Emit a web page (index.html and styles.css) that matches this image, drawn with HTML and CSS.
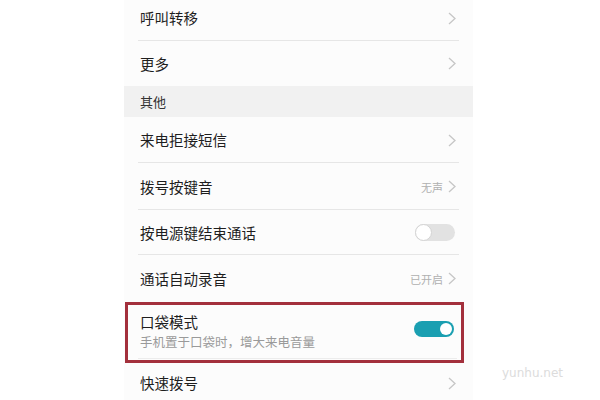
FILE: index.html
```html
<!DOCTYPE html>
<html lang="zh-CN">
<head>
    <meta charset="UTF-8">
    <meta name="viewport" content="width=device-width, initial-scale=1.0">
    <title>通话设置</title>
    <link rel="stylesheet" href="styles.css">
</head>
<body>
    <div class="screen">
        <div class="row line" style="height: 46px;">
            <span class="label">呼叫转移</span>
            <span class="right"><svg class="chev" viewBox="0 0 8 13"><polyline points="1,1 7,6.5 1,12"/></svg></span>
        </div>
        <div class="row" style="height: 45px;">
            <span class="label">更多</span>
            <span class="right"><svg class="chev" viewBox="0 0 8 13"><polyline points="1,1 7,6.5 1,12"/></svg></span>
        </div>
        <div class="section">其他</div>
        <div class="row line" style="height: 46px;">
            <span class="label">来电拒接短信</span>
            <span class="right"><svg class="chev" viewBox="0 0 8 13"><polyline points="1,1 7,6.5 1,12"/></svg></span>
        </div>
        <div class="row line" style="height: 47px;">
            <span class="label">拨号按键音</span>
            <span class="right"><span class="value">无声</span><svg class="chev" viewBox="0 0 8 13"><polyline points="1,1 7,6.5 1,12"/></svg></span>
        </div>
        <div class="row line" style="height: 45px;">
            <span class="label">按电源键结束通话</span>
            <span class="toggle"><span class="knob"></span></span>
        </div>
        <div class="row" style="height: 47px;">
            <span class="label">通话自动录音</span>
            <span class="right"><span class="value">已开启</span><svg class="chev" viewBox="0 0 8 13"><polyline points="1,1 7,6.5 1,12"/></svg></span>
        </div>
        <div class="row pocket">
            <div class="texts">
                <span class="label">口袋模式</span>
                <span class="sub">手机置于口袋时，增大来电音量</span>
            </div>
            <span class="toggle on"><span class="knob"></span></span>
        </div>
        <div class="row last">
            <span class="label">快速拨号</span>
            <span class="right"><svg class="chev" viewBox="0 0 8 13"><polyline points="1,1 7,6.5 1,12"/></svg></span>
        </div>
    </div>
    <div class="mark">yunhu.net</div>
</body>
</html>
```

FILE: styles.css
```css
*{
    margin: 0;
    padding: 0;
    box-sizing: border-box;
}
html, body{
    height: 100%;
    overflow: hidden;
}
body{
    background: #ffffff;
    font-family: "Noto Sans CJK SC", "Noto Sans", sans-serif;
    color: #222;
}
.screen{
    width: 349px;
    margin-left: 124px;
    margin-top: -5px;
    background: #fcfcfc;
    min-height: 420px;
}
.row{
    display: flex;
    align-items: center;
    justify-content: space-between;
    padding: 0 17px 0 16px;
    position: relative;
}
.row.line::after{
    content: "";
    position: absolute;
    left: 14px;
    right: 14px;
    bottom: 0;
    height: 1px;
    background: #e6e6e6;
}
.label{
    font-size: 14.5px;
    line-height: 20px;
    color: #1e1e1e;
}
.right{
    display: flex;
    align-items: center;
    gap: 5px;
}
.value{
    font-size: 11px;
    color: #b0b0b0;
}
.chev{
    width: 8px;
    height: 13px;
    fill: none;
    stroke: #c6c6c6;
    stroke-width: 1.3;
}
.section{
    height: 31px;
    background: #f1f1f1;
    padding-left: 16px;
    display: flex;
    align-items: center;
    font-size: 13px;
    color: #333;
}
.toggle{
    width: 40px;
    height: 17px;
    border-radius: 9px;
    background: #e2e2e2;
    position: relative;
    margin-right: 1px;
}
.toggle .knob{
    position: absolute;
    left: 0;
    top: 0;
    width: 17px;
    height: 17px;
    border-radius: 50%;
    background: #fff;
    border: 1px solid #d4d4d4;
}
.toggle.on{
    background: #1a9fb1;
    height: 16px;
    margin-top: 16px;
}
.toggle.on .knob{
    left: auto;
    right: 2px;
    top: 2px;
    width: 12px;
    height: 12px;
    border: none;
}
.pocket{
    height: 61px;
    margin: 0 9px 0 1px;
    border: 3.5px solid #a3303c;
    padding: 0 6px 0 12px;
    align-items: flex-start;
}
.pocket::after{
    content: "";
    position: absolute;
    left: 10px;
    right: 4px;
    bottom: 1px;
    height: 1px;
    background: #ececec;
}
.texts{
    display: flex;
    flex-direction: column;
    padding-top: 7px;
}
.sub{
    font-size: 12.5px;
    line-height: 18px;
    color: #9a9a9a;
    margin-top: 1px;
}
.last{
    height: 40px;
}
.mark{
    position: absolute;
    left: 502px;
    top: 366px;
    font-family: "DejaVu Sans", sans-serif;
    font-size: 12px;
    color: #dcdcdc;
}
```
